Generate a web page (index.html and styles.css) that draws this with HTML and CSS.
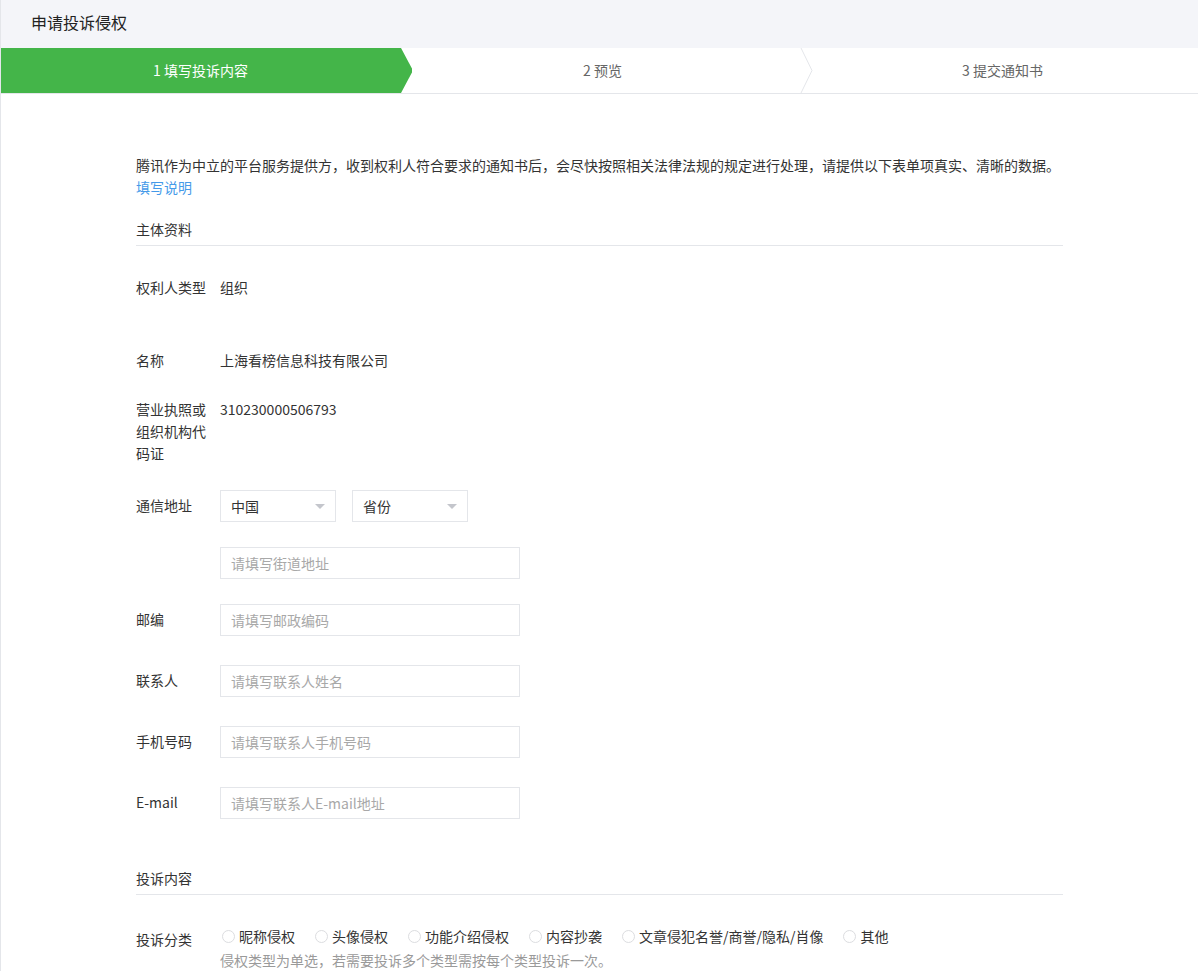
FILE: index.html
```html
<!DOCTYPE html>
<html>
<head>
<meta charset="utf-8">
<title>申请投诉侵权</title>
<link rel="stylesheet" href="styles.css">
</head>
<body>
  <div id="page">
    <div class="page-head">申请投诉侵权</div>

    <div class="steps">
      <div class="step step-current">1 填写投诉内容</div>
      <div class="step step-mid">
        2 预览
        <svg class="step-sep" width="14" height="45" viewBox="0 0 14 45">
          <polyline points="1,0 12,22.5 1,45" fill="none" stroke="#e4e6ea" stroke-width="1"/>
        </svg>
      </div>
      <div class="step step-last">3 提交通知书</div>
    </div>

    <div class="main">
      <p class="intro">腾讯作为中立的平台服务提供方，收到权利人符合要求的通知书后，会尽快按照相关法律法规的规定进行处理，请提供以下表单项真实、清晰的数据。<br><a class="link" href="#">填写说明</a></p>

      <h3 class="section-title">主体资料</h3>

      <div class="row row-first">
        <div class="label">权利人类型</div>
        <div class="value">组织</div>
      </div>
      <div class="row row-wide">
        <div class="label">名称</div>
        <div class="value">上海看榜信息科技有限公司</div>
      </div>
      <div class="row row-licence">
        <div class="label">营业执照或组织机构代码证</div>
        <div class="value">310230000506793</div>
      </div>

      <div class="row row-field">
        <div class="label">通信地址</div>
        <div class="selects">
          <div class="select">中国<span class="caret"></span></div>
          <div class="select">省份<span class="caret"></span></div>
        </div>
      </div>
      <div class="row row-field row-tight">
        <div class="label"></div>
        <input class="input" type="text" placeholder="请填写街道地址">
      </div>
      <div class="row row-field row-tight">
        <div class="label">邮编</div>
        <input class="input" type="text" placeholder="请填写邮政编码">
      </div>
      <div class="row row-field row-loose">
        <div class="label">联系人</div>
        <input class="input" type="text" placeholder="请填写联系人姓名">
      </div>
      <div class="row row-field row-loose">
        <div class="label">手机号码</div>
        <input class="input" type="text" placeholder="请填写联系人手机号码">
      </div>
      <div class="row row-field row-loose">
        <div class="label">E-mail</div>
        <input class="input" type="text" placeholder="请填写联系人E-mail地址">
      </div>

      <h3 class="section-title section-title-next">投诉内容</h3>

      <div class="row row-radios">
        <div class="label">投诉分类</div>
        <div class="value">
          <div class="radios">
            <label class="radio"><span class="radio-dot"></span>昵称侵权</label>
            <label class="radio"><span class="radio-dot"></span>头像侵权</label>
            <label class="radio"><span class="radio-dot"></span>功能介绍侵权</label>
            <label class="radio"><span class="radio-dot"></span>内容抄袭</label>
            <label class="radio"><span class="radio-dot"></span>文章侵犯名誉/商誉/隐私/肖像</label>
            <label class="radio"><span class="radio-dot"></span>其他</label>
          </div>
          <div class="hint">侵权类型为单选，若需要投诉多个类型需按每个类型投诉一次。</div>
        </div>
      </div>
    </div>
  </div>
</body>
</html>
```

FILE: styles.css
```css
html, body {
  margin: 0;
  padding: 0;
  background: #fff;
}

body {
  font-family: "Noto Sans CJK SC", "Open Sans", sans-serif;
  font-size: 14px;
  color: #333;
  overflow: hidden;
}

#page {
  border-left: 1px solid #e4e6ea;
  min-height: 971px;
}

.page-head {
  height: 48px;
  line-height: 45px;
  padding-left: 30px;
  font-size: 16px;
  color: #222;
  background: #f4f5f9;
}

/* steps */
.steps {
  display: flex;
  height: 45px;
  border-bottom: 1px solid #e4e6ea;
}

.step {
  position: relative;
  box-sizing: border-box;
  line-height: 45px;
  text-align: center;
  color: #666;
}

.step-current {
  width: 412px;
  padding-right: 12px;
  background: #44b549;
  color: #fff;
  clip-path: polygon(0 0, 400px 0, 412px 50%, 400px 100%, 0 100%);
}

.step-mid {
  width: 388px;
  padding-right: 6px;
}

.step-last {
  width: 400px;
  padding-left: 8px;
}

.step-sep {
  position: absolute;
  left: 388px;
  top: 0;
}

/* content */
.main {
  width: 927px;
  padding: 60px 0 0 135px;
}

.intro {
  margin: 0;
  line-height: 22px;
}

.link {
  color: #459ae9;
  text-decoration: none;
}

.section-title {
  margin: 20px 0 0;
  padding-bottom: 5px;
  line-height: 22px;
  font-size: 14px;
  font-weight: normal;
  border-bottom: 1px solid #e4e6ea;
}

.section-title-next {
  margin-top: 48px;
}

.row {
  display: flex;
  align-items: flex-start;
  margin-top: 26px;
  line-height: 22px;
}

.row-first { margin-top: 30px; }
.row-wide { margin-top: 51px; }
.row-licence { margin-top: 27px; }

.label {
  width: 72px;
  margin-right: 12px;
  flex: none;
  line-height: 22px;
}

.row-field .label {
  line-height: 30px;
}

.row-tight { margin-top: 25px; }
.row-loose { margin-top: 29px; }

.selects {
  display: flex;
  gap: 16px;
}

.select {
  position: relative;
  width: 116px;
  height: 32px;
  box-sizing: border-box;
  padding-left: 10px;
  line-height: 30px;
  border: 1px solid #e4e6ea;
  color: #333;
}

.caret {
  position: absolute;
  right: 10px;
  top: 13px;
  border-left: 5px solid transparent;
  border-right: 5px solid transparent;
  border-top: 5px solid #c4c6cc;
}

.input {
  width: 300px;
  height: 32px;
  box-sizing: border-box;
  margin: 0;
  padding: 0 10px;
  border: 1px solid #e4e6ea;
  border-radius: 0;
  font-family: inherit;
  font-size: 14px;
  color: #333;
  outline: none;
}

.input::placeholder {
  color: #a8a8a8;
}

.row-radios {
  margin-top: 30px;
}

.row-radios .label {
  padding-top: 3px;
}

.radios {
  display: flex;
  margin-left: 2px;
}

.radio {
  display: flex;
  align-items: center;
  margin-right: 20px;
  color: #333;
}

.radio-dot {
  width: 11px;
  height: 11px;
  margin-right: 4px;
  border: 1px solid #dcdde0;
  border-radius: 50%;
}

.hint {
  margin-top: 2px;
  color: #9a9a9a;
}
```
